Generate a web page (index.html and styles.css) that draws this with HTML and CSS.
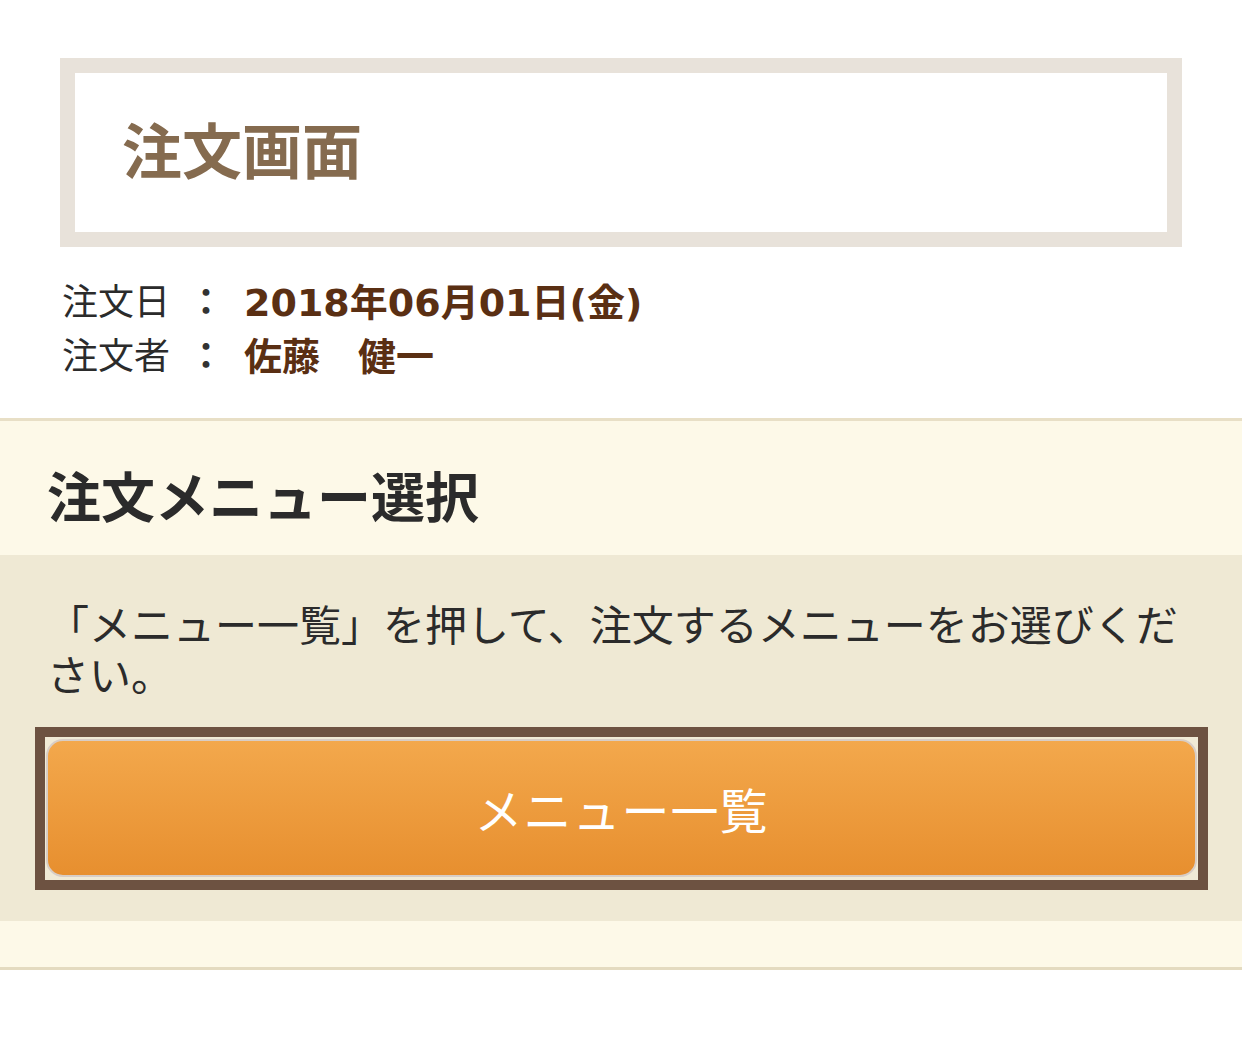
FILE: index.html
```html
<!DOCTYPE html>
<html lang="ja">
<head>
    <meta charset="UTF-8">
    <meta name="viewport" content="width=device-width, initial-scale=1.0">
    <title>注文画面</title>
    <link rel="stylesheet" href="styles.css">
</head>
<body>
    <div class="page-title">
        <h1>注文画面</h1>
    </div>

    <div class="order-info">
        <div class="info-row">
            <span class="info-label">注文日</span>
            <span class="info-colon">：</span>
            <span class="info-value">2018年06月01日(金)</span>
        </div>
        <div class="info-row">
            <span class="info-label">注文者</span>
            <span class="info-colon">：</span>
            <span class="info-value">佐藤　健一</span>
        </div>
    </div>

    <section class="menu-select">
        <h2>注文メニュー選択</h2>
        <div class="menu-body">
            <p class="lead">「メニュー一覧」を押して、注文するメニューをお選びください。</p>
            <div class="btn-frame">
                <button type="button" class="menu-btn">メニュー一覧</button>
            </div>
        </div>
        <div class="menu-foot"></div>
    </section>
</body>
</html>
```

FILE: styles.css
```css
body {
    margin: 0;
    background: #fff;
    color: #2b2b2b;
    font-family: "Noto Sans CJK JP", "Noto Sans", sans-serif;
}

.page-title {
    margin: 58px 60px 0;
    border: 15px solid #e8e2da;
    background: #fff;
    padding: 35px 47px 45px;
}

.page-title h1 {
    margin: 0;
    font-size: 60px;
    line-height: 79px;
    font-weight: 700;
    color: #856b4f;
}

.order-info {
    padding: 25px 62px 38px;
}

.info-row {
    display: flex;
    align-items: center;
    height: 54px;
}

.info-label {
    font-size: 36px;
    color: #2b2b2b;
    width: 126px;
}

.info-colon {
    font-size: 36px;
    font-weight: 700;
    color: #333;
    width: 56px;
}

.info-value {
    font-family: "DejaVu Sans", "Noto Sans CJK JP", sans-serif;
    font-size: 38px;
    font-weight: 700;
    color: #5a2f13;
}

.menu-select {
    border-top: 3px solid #e8dfc6;
    border-bottom: 3px solid #e4dbc0;
}

.menu-select h2 {
    margin: 0;
    background: #fdf9e8;
    padding: 47px 47px 33px;
    font-size: 54px;
    line-height: 54px;
    font-weight: 700;
    color: #2b2b2b;
}

.menu-body {
    background: #efe9d4;
    padding: 43px 0 31px;
}

.lead {
    margin: 0;
    padding: 0 47px;
    font-size: 42px;
    line-height: 50px;
    color: #2b2b2b;
}

.btn-frame {
    margin: 29px 34px 0 35px;
    border: 10px solid #6d5241;
    padding: 2px 1px 3px;
    background: #f0ead6;
}

.menu-btn {
    display: block;
    width: 100%;
    height: 138px;
    border: 2px solid #d8cdc5;
    border-radius: 17px;
    background: linear-gradient(#f3a84c, #e78f2f);
    color: #fff;
    font-family: inherit;
    font-size: 48px;
    letter-spacing: 1px;
    cursor: pointer;
}

.menu-foot {
    height: 46px;
    background: #fdf9e8;
}
```
